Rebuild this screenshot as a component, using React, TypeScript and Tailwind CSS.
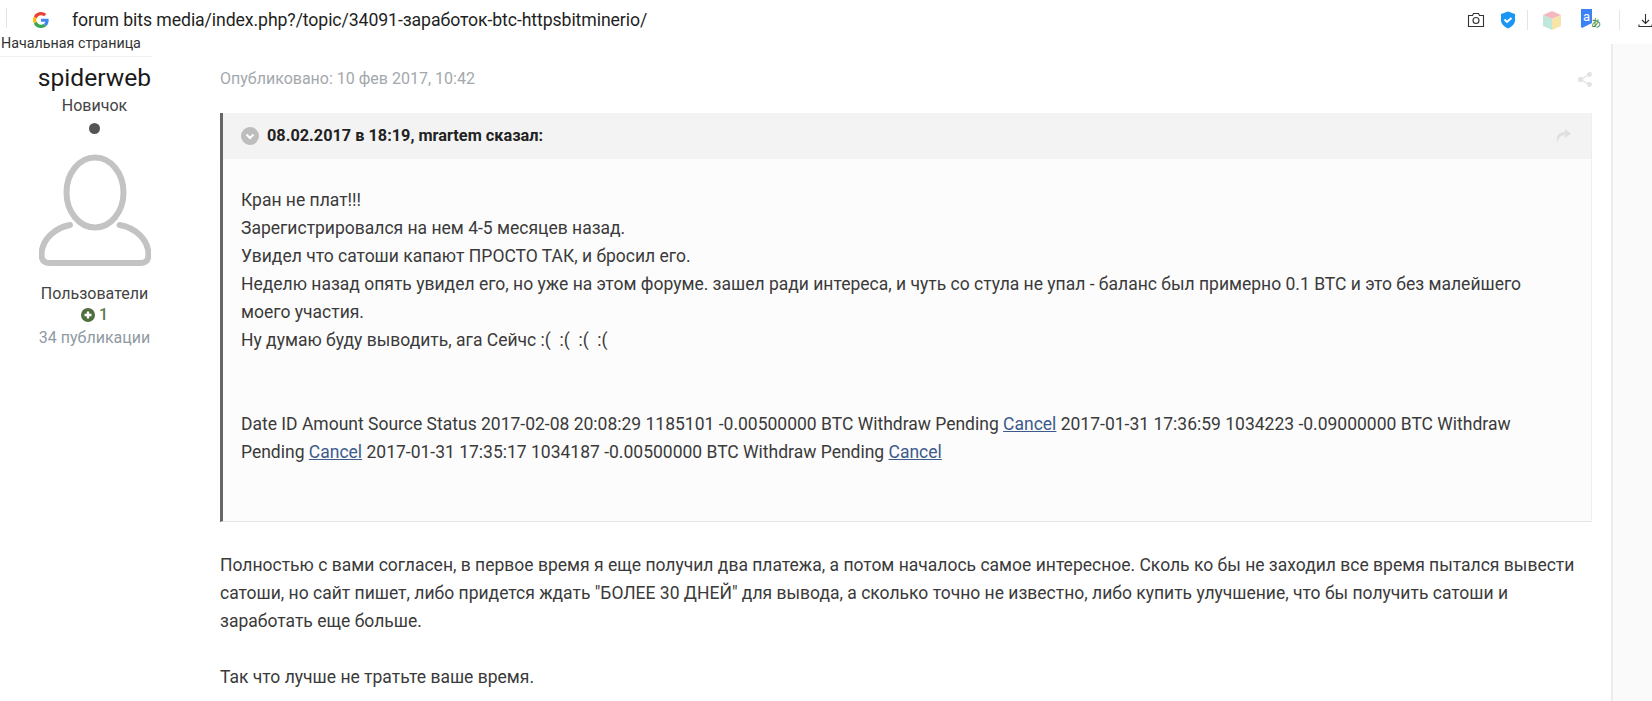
import React from "react";

function GoogleG() {
  return (
    <svg width="16" height="16" viewBox="0 0 48 48" className="shrink-0">
      <path fill="#EA4335" d="M24 9.5c3.5 0 6.7 1.2 9.200 3.600l6.900-6.900C35.900 2.400 30.400 0 24 0 14.600 0 6.500 5.400 2.600 13.200l8 6.200C12.500 13.600 17.800 9.500 24 9.500z" />
      <path fill="#4285F4" d="M46.900 24.500c0-1.600-.1-3.100-.4-4.500H24v9h12.900c-.6 3-2.200 5.500-4.700 7.200l7.700 6c4.500-4.200 7-10.300 7-17.700z" />
      <path fill="#FBBC05" d="M10.500 28.600c-.5-1.400-.8-3-.8-4.600s.3-3.200.8-4.600l-8-6.200C.9 16.500 0 20.100 0 24s.9 7.500 2.600 10.800l7.900-6.200z" />
      <path fill="#34A853" d="M24 48c6.500 0 11.900-2.100 15.900-5.800l-7.700-6c-2.100 1.400-4.900 2.300-8.200 2.300-6.200 0-11.500-4.200-13.400-9.800l-8 6.200C6.500 42.600 14.600 48 24 48z" />
    </svg>
  );
}

function TopIcons() {
  return (
    <div className="flex items-center h-[40px] -mr-[1px]">
      <svg width="18" height="16" viewBox="0 0 18 16" fill="none" stroke="#333" strokeWidth="1.1" className="mr-[15px]">
        <path d="M1.500 3.500h4l1-2h5l1 2h4v11h-15z" />
        <circle cx="9" cy="8.500" r="3" />
      </svg>
      <svg width="16" height="18" viewBox="0 0 16 18" className="mr-[11px]">
        <path fill="#1a97f5" d="M8 .5l7 2.500v6c0 4-3 6.800-7 8.500-4-1.700-7-4.500-7-8.500V3z" />
        <path fill="none" stroke="#fff" strokeWidth="2" d="M4.500 8.500l2.500 2.500 4.500-4" />
      </svg>
      <div className="w-[1px] h-[20px] bg-[#e4e4e4] mr-[15px]" />
      <svg width="18" height="19" viewBox="0 0 18 19" className="mr-[19px]">
        <path fill="#f6b8c0" d="M9 0l9 4-9 4-9-4z" />
        <path fill="#bfe8da" d="M0 4l9 4v11l-9-4z" />
        <path fill="#f8e3a8" d="M18 4l-9 4v11l9-4z" />
      </svg>
      <div className="relative w-[20px] h-[22px] mr-[19px]">
        <svg width="13" height="20" viewBox="0 0 13 20" className="absolute left-0 top-0">
          <path fill="#3b82f6" d="M1 0h11v14l-4 2-6 3-1-1z" />
        </svg>
        <span className="absolute left-[3px] top-[-1px] text-[13px] leading-[18px] text-white font-['Roboto',sans-serif]">a</span>
        <span className="absolute left-[11px] top-[7px] text-[10px] leading-[14px] text-[#2e7d32] font-['Noto_Sans_CJK_JP',sans-serif]">あ</span>
      </div>
      <div className="w-[1px] h-[20px] bg-[#e4e4e4] mr-[18px]" />
      <svg width="15" height="15" viewBox="0 0 15 15" fill="none" stroke="#333" strokeWidth="1.1">
        <path d="M7.500 1v9M4 7l3.500 3.500L11 7M1 11.500v2h13v-2" />
      </svg>
    </div>
  );
}

function Avatar() {
  return (
    <svg width="112" height="112" viewBox="0 0 112 112" fill="none" stroke="#c3c3c3" strokeWidth="6" strokeLinecap="round">
      <ellipse cx="56" cy="38.500" rx="28.500" ry="35" />
      <path d="M31 71C15 74 3 86 2.500 100c0 6 2 9 8 9h91c6 0 8-3 8-9-.5-14-12-26-29-29" />
    </svg>
  );
}

function ChevronCircle() {
  return (
    <svg width="18" height="18" viewBox="0 0 18 18" className="shrink-0">
      <circle cx="9" cy="9" r="9" fill="#bdbdbd" />
      <path d="M5.500 7.500L9 11l3.500-3.500" fill="none" stroke="#fff" strokeWidth="2" />
    </svg>
  );
}

function Share() {
  return (
    <svg width="14" height="15" viewBox="0 0 14 15" fill="#e2e2e2" stroke="#e2e2e2" strokeWidth="1.300">
      <circle cx="11.500" cy="2.500" r="1.800" />
      <circle cx="2.500" cy="7.500" r="2" />
      <circle cx="11.500" cy="12.500" r="1.800" />
      <path d="M11.500 2.500l-9 5 9 5" fill="none" />
    </svg>
  );
}

function Reply() {
  return (
    <svg width="16" height="14" viewBox="0 0 16 14" fill="#e0e0e0">
      <path d="M10 0l6 4.500L10 9V6.200C6 6.200 3.500 8.500 2.500 14 .500 8 3 3 10 2.800z" />
    </svg>
  );
}

function A({ children }: { children: React.ReactNode }) {
  return <a className="text-[#3d5a8a] underline">{children}</a>;
}

export default function App() {
  return (
    <div className="w-[1652px] h-[701px] overflow-hidden bg-white font-['Roboto',sans-serif] text-[16px] text-[#3a3a3a] flex flex-col">
      <header className="h-[44px] shrink-0 flex pl-[6px] justify-between">
        <div className="flex items-start">
          <div className="w-[1px] h-[20px] mt-[8px] bg-[#e4e4e4] mr-[26px]" />
          <div className="flex pt-[11px] items-center">
            <GoogleG />
            <span className="ml-[23px] text-[17.7px] leading-[18px] text-[#1f1f1f] tracking-[-0.1px] whitespace-nowrap">
              forum bits media/index.php?/topic/34091-заработок-btc-httpsbitminerio/
            </span>
          </div>
        </div>
        <TopIcons />
      </header>

      <div className="flex flex-1 min-h-0 relative">
        <div className="absolute left-0 top-[-11px] pl-[1px] text-[14.3px] leading-[20px] whitespace-nowrap text-[#333] bg-white border-b border-[#f0f0f0] w-[152px] h-[24px]">
          Начальная страница
        </div>

        <aside className="w-[220px] shrink-0 pr-[31px] pt-[19px] flex flex-col items-center">
          <div className="text-[24.6px] leading-[30px] text-[#1a1a1a]">spiderweb</div>
          <div className="mt-[3px] text-[16px] leading-[20px] text-[#444]">Новичок</div>
          <div className="mt-[7px] w-[11px] h-[11px] rounded-full bg-[#555]" />
          <div className="mt-[20px]">
            <Avatar />
          </div>
          <div className="mt-[18px] text-[16px] leading-[20px] text-[#444]">Пользователи</div>
          <div className="flex items-center gap-[4px] text-[16px] leading-[22px] font-medium text-[#5a7a4a]">
            <svg width="14" height="14" viewBox="0 0 14 14">
              <circle cx="7" cy="7" r="7" fill="#4e6e3d" />
              <path d="M7 3.500v7M3.500 7h7" stroke="#fff" strokeWidth="2.400" />
            </svg>
            1
          </div>
          <div className="mt-[2px] text-[16px] leading-[20px] text-[#8f9aa3]">34 публикации</div>
        </aside>

        <main className="w-[1372px] shrink-0">
          <div className="flex justify-between items-center pt-[9px] h-[69px] pb-[8px]">
            <span className="text-[16px] leading-[20px] text-[#a3a8ad]">Опубликовано: 10 фев 2017, 10:42</span>
            <span className="mt-[1px] flex"><Share /></span>
          </div>

          <blockquote className="h-[409px] border-l-[3px] border-b border-r border-l-[#666] border-b-[#e4e4e4] border-r-[#eeeeee] bg-[#fcfcfc]">
            <div className="h-[46px] bg-[#f3f3f3] flex items-center pl-[18px] pr-[20px]">
              <ChevronCircle />
              <span className="ml-[8px] text-[16.3px] font-bold text-[#222]">08.02.2017 в 18:19, mrartem сказал:</span>
              <span className="ml-auto flex"><Reply /></span>
            </div>
            <div className="pt-[27px] pl-[18px] pr-[60px] text-[17.5px] leading-[28px]">
              <p>Кран не плат!!!</p>
              <p>Зарегистрировался на нем 4-5 месяцев назад.</p>
              <p>Увидел что сатоши капают ПРОСТО ТАК, и бросил его.</p>
              <p>
                Неделю назад опять увидел его, но уже на этом форуме. зашел ради интереса, и чуть со стула не упал - баланс был примерно 0.1 BTC и это без малейшего
                <br />
                моего участия.
              </p>
              <p>Ну думаю буду выводить, ага Сейчс :(&nbsp; :(&nbsp; :(&nbsp; :(</p>
              <p className="mt-[56px]">
                Date ID Amount Source Status 2017-02-08 20:08:29 1185101 -0.00500000 BTC Withdraw Pending <A>Cancel</A> 2017-01-31 17:36:59 1034223 -0.09000000 BTC Withdraw
                <br />
                Pending <A>Cancel</A> 2017-01-31 17:35:17 1034187 -0.00500000 BTC Withdraw Pending <A>Cancel</A>
              </p>
            </div>
          </blockquote>

          <div className="pt-[29px] text-[17.5px] leading-[28px]">
            <p>
              Полностью с вами согласен, в первое время я еще получил два платежа, а потом началось самое интересное. Сколь ко бы не заходил все время пытался вывести
              <br />
              сатоши, но сайт пишет, либо придется ждать "БОЛЕЕ 30 ДНЕЙ" для вывода, а сколько точно не известно, либо купить улучшение, что бы получить сатоши и
              <br />
              заработать еще больше.
            </p>
            <p className="mt-[28px]">Так что лучше не тратьте ваше время.</p>
          </div>
        </main>

        <div className="ml-[19px] w-[41px] border-l-[2px] border-[#ececec] bg-[#fafafa]" />
      </div>
    </div>
  );
}
